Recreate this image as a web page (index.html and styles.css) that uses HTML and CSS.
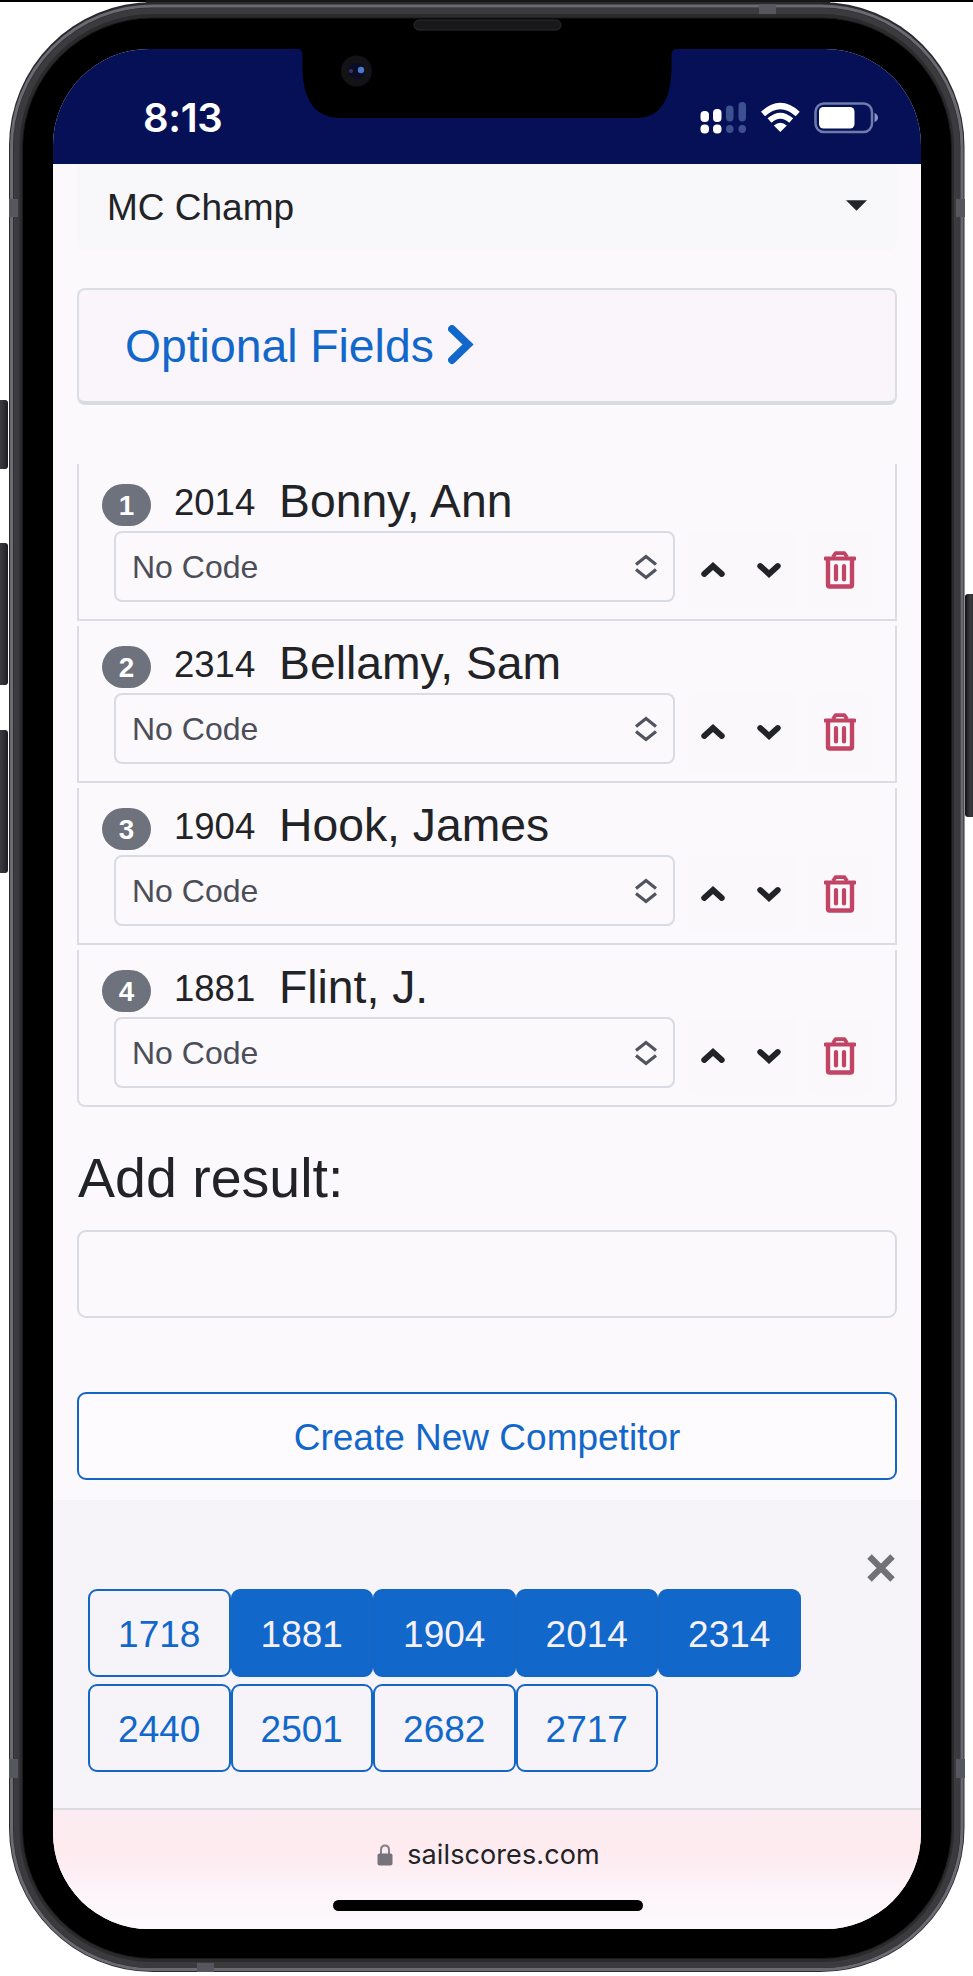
FILE: index.html
```html
<!DOCTYPE html>
<html lang="en">
<head>
<meta charset="utf-8">
<title>SailScores</title>
<link rel="stylesheet" href="styles.css">
</head>
<body>
<div class="stage">
  <svg class="frame" width="973" height="1976" viewBox="0 0 973 1976" aria-hidden="true">
    <defs>
      <linearGradient id="key" x1="0" x2="1"><stop offset="0" stop-color="#111114"/><stop offset=".4" stop-color="#3a3a40"/><stop offset="1" stop-color="#1d1d21"/></linearGradient>
    </defs>
    <rect width="973" height="2" fill="#000"/>
    <rect x="146" y="0" width="684" height="8" fill="#17171a"/>
    <g fill="url(#key)"><rect x="-4" y="400" width="12" height="69" rx="3"/><rect x="-4" y="543" width="12" height="142" rx="3"/><rect x="-4" y="730" width="12" height="143" rx="3"/><rect x="965" y="594" width="13" height="223" rx="3"/></g>
    <rect x="9" y="2" width="955.500" height="1970" rx="144" fill="#2b2b2e"/>
    <rect x="11.500" y="6" width="950.500" height="1963.500" rx="141" fill="none" stroke="#6b6a72" stroke-width="3"/>
    <rect x="16.500" y="11" width="940.500" height="1954" rx="136" fill="none" stroke="#3b3b3e" stroke-width="6"/>
    <rect x="22.500" y="18" width="929" height="1940.500" rx="130" fill="#000" stroke="#1a1a1d"/>
    <g fill="#56565e"><rect x="9" y="199" width="9" height="18"/><rect x="956" y="199" width="9" height="18"/><rect x="9" y="1759" width="9" height="19"/><rect x="956" y="1759" width="9" height="19"/><rect x="759" y="4" width="17" height="10"/><rect x="197" y="1963" width="17" height="9"/></g>
  </svg>

  <main class="screen">
    <header class="status">
      <span class="time">8:13</span>
      <svg class="signals" width="182" height="36" viewBox="698 100 182 36" aria-hidden="true">
        <g fill="#fff"><rect x="700.500" y="111" width="8.500" height="11" rx="4"/><rect x="700.500" y="124.500" width="8.500" height="9" rx="4"/><rect x="713" y="109" width="8.500" height="13" rx="4"/><rect x="713" y="124.500" width="8.500" height="9" rx="4"/></g>
        <g fill="#3d5090"><rect x="726" y="105.500" width="7.500" height="16" rx="3.700"/><rect x="726" y="125" width="7.500" height="8" rx="3.700"/><rect x="738.500" y="102" width="7.500" height="19.500" rx="3.700"/><rect x="738.500" y="125" width="7.500" height="8" rx="3.700"/></g>
        <g fill="none" stroke="#fff" stroke-width="6"><path d="M763 114Q780.300 98 797.700 114"/><path d="M769.500 120.500Q780.300 111 791.200 120.500"/></g>
        <path d="M773.800 125.500Q780.300 120 786.800 125.500L780.300 132Z" fill="#fff"/>
        <rect x="815.500" y="103.500" width="56.500" height="28.500" rx="8.500" fill="none" stroke="#6c7cab" stroke-width="2.500"/>
        <rect x="819" y="107" width="35.500" height="21.500" rx="4.500" fill="#fff"/>
        <path d="M874.500 113Q878 114.500 878 117.500T874.500 122Z" fill="#8497c8"/>
      </svg>
    </header>

    <section class="content">
      <div class="series"><span>MC Champ</span>
        <svg width="21" height="11" viewBox="0 0 21 11"><path d="M0 .3H21L10.500 10.800Z" fill="#222428"/></svg>
      </div>
      <div class="card"><span>Optional Fields</span>
        <svg width="26" height="40" viewBox="0 0 26 40"><path d="M4 4L20 19.500L4 35" fill="none" stroke="#1167ca" stroke-width="7.800" stroke-linejoin="miter" stroke-linecap="round"/></svg>
      </div>

      <svg class="defs" width="0" height="0" aria-hidden="true">
        <symbol id="sort" viewBox="0 0 22 26"><path d="M1 10.500L11 2.500L21 10.500M1 15.500L11 23.500L21 15.500" fill="none" stroke="#50545f" stroke-width="3.200"/></symbol>
        <symbol id="up" viewBox="0 0 24 16"><path d="M3.200 12L12 4L20.800 12" fill="none" stroke="#212327" stroke-width="5.800" stroke-linecap="round"/></symbol>
        <symbol id="down" viewBox="0 0 24 16"><path d="M3.200 4L12 12L20.800 4" fill="none" stroke="#212327" stroke-width="5.800" stroke-linecap="round"/></symbol>
        <symbol id="trash" viewBox="0 0 32 38"><g fill="none" stroke="#c24464"><path d="M9 6L11.500 2.200H20.500L23 6" stroke-width="3.800" stroke-linejoin="round"/><path d="M1.500 7.500H30.500" stroke-width="4" stroke-linecap="round"/><path d="M4 8V34Q4 35.500 5.500 35.500H26.500Q28 35.500 28 34V8" stroke-width="4.400"/><path d="M12 15V28.500M20 15V28.500" stroke-width="4.200" stroke-linecap="round"/></g></symbol>
      </svg>

      <div class="results">
        <div class="row">
          <div class="head"><b class="badge">1</b><span class="sail">2014</span><span class="name">Bonny, Ann</span></div>
          <div class="tools"><div class="code">No Code<svg width="22" height="26"><use href="#sort"/></svg></div><div class="move"><svg width="24" height="16"><use href="#up"/></svg><svg width="24" height="16"><use href="#down"/></svg></div><div class="del"><svg width="32" height="38"><use href="#trash"/></svg></div></div>
        </div>
        <div class="row">
          <div class="head"><b class="badge">2</b><span class="sail">2314</span><span class="name">Bellamy, Sam</span></div>
          <div class="tools"><div class="code">No Code<svg width="22" height="26"><use href="#sort"/></svg></div><div class="move"><svg width="24" height="16"><use href="#up"/></svg><svg width="24" height="16"><use href="#down"/></svg></div><div class="del"><svg width="32" height="38"><use href="#trash"/></svg></div></div>
        </div>
        <div class="row">
          <div class="head"><b class="badge">3</b><span class="sail">1904</span><span class="name">Hook, James</span></div>
          <div class="tools"><div class="code">No Code<svg width="22" height="26"><use href="#sort"/></svg></div><div class="move"><svg width="24" height="16"><use href="#up"/></svg><svg width="24" height="16"><use href="#down"/></svg></div><div class="del"><svg width="32" height="38"><use href="#trash"/></svg></div></div>
        </div>
        <div class="row last">
          <div class="head"><b class="badge">4</b><span class="sail">1881</span><span class="name">Flint, J.</span></div>
          <div class="tools"><div class="code">No Code<svg width="22" height="26"><use href="#sort"/></svg></div><div class="move"><svg width="24" height="16"><use href="#up"/></svg><svg width="24" height="16"><use href="#down"/></svg></div><div class="del"><svg width="32" height="38"><use href="#trash"/></svg></div></div>
        </div>
      </div>

      <div class="add">Add result:</div>
      <div class="field"></div>
      <div class="create">Create New Competitor</div>
    </section>

    <section class="picker">
      <svg class="close" width="28" height="28" viewBox="0 0 28 28"><path d="M2.500 2.500L25.500 25.500M25.500 2.500L2.500 25.500" stroke="#717178" stroke-width="6.300"/></svg>
      <div class="chips">
        <span class="chip">1718</span><span class="chip on">1881</span><span class="chip on">1904</span><span class="chip on">2014</span><span class="chip on">2314</span>
        <span class="chip">2440</span><span class="chip">2501</span><span class="chip">2682</span><span class="chip">2717</span>
      </div>
    </section>

    <footer class="browser">
      <div class="address">
        <svg width="16" height="22" viewBox="0 0 16 22"><path d="M4 10V6Q4 1.500 8 1.500T12 6V10" fill="none" stroke="#85818a" stroke-width="2"/><rect x=".5" y="9.500" width="15" height="12" rx="2" fill="#77737b"/></svg>
        <span>sailscores.com</span>
      </div>
      <div class="home"></div>
    </footer>
  </main>

  <svg class="notch" width="386" height="110" viewBox="294 14 386 110" aria-hidden="true">
    <path d="M294 49H298Q302.500 49 302.500 57V70Q304 118 341 118H636Q670 118 671.500 70V57Q671.500 49 676 49H680V44H294Z" fill="#000"/>
    <rect x="414" y="20" width="147" height="10" rx="5" fill="#18181a" stroke="#2c2c2f"/>
    <circle cx="356.500" cy="71" r="15.500" fill="#131317"/>
    <circle cx="357" cy="71" r="8" fill="#0b0c25"/>
    <circle cx="361" cy="70" r="3.200" fill="#5078c8"/><circle cx="351" cy="71" r="2" fill="#34346e"/>
  </svg>
</div>
</body>
</html>
```
FILE: styles.css
```css
* { box-sizing: border-box; }
body { margin: 0; background: #fff; font-family: "Liberation Sans", Arial, sans-serif; color: #212327; }
svg { display: block; flex: none; }
.stage { position: relative; width: 973px; height: 1976px; padding: 49px 52px 0 53px; overflow: hidden; }
.frame { position: absolute; left: 0; top: 0; }
.screen { position: relative; width: 868px; height: 1879.5px; border-radius: 96px; overflow: hidden; background: #fbf9fc; display: flex; flex-direction: column; }
.notch { position: absolute; left: 294px; top: 14px; }
.defs { position: absolute; }

.status { flex: none; height: 115px; background: #061056; display: flex; justify-content: space-between; padding: 51px 41px 0 90px; }
.time { font: 600 40px/36px Inter, sans-serif; color: #fff; letter-spacing: -0.3px; }

.content { flex: none; height: 1335.5px; padding: 0 24px; }
.series { height: 86px; display: flex; align-items: center; justify-content: space-between; padding: 2px 30px 0 30px; background: #f8f7fa; border-radius: 0 0 8px 8px; font-size: 37px; }
.series svg { margin-top: -5px; }
.card { margin-top: 38px; height: 117px; border: 2px solid #dcdee5; border-bottom: 4px solid #d7dbe2; border-radius: 8px; background: #f9f5fa; display: flex; align-items: center; padding-left: 46px; font-size: 46.3px; color: #1167ca; }
.card svg { margin-left: 14px; margin-top: -2px; }

.results { margin-top: 59px; display: flex; flex-direction: column; gap: 5px; }
.row { height: 157px; border: 2px solid #dcdde4; border-top: 0; }
.row.last { border-radius: 0 0 8px 8px; }
.head { height: 67px; padding: 7px 0 0 23px; display: flex; align-items: center; line-height: 60px; white-space: nowrap; }
.badge { width: 49px; height: 42px; margin-top: 8px; border-radius: 21px; background: #6d727d; color: #fff; font-size: 27.8px; line-height: 43px; text-align: center; }
.sail { width: 128px; padding-left: 23px; margin-top: 3px; font-size: 36.5px; }
.name { font-size: 46.3px; }
.tools { display: flex; padding-left: 35px; }
.code { width: 561px; height: 71px; border: 2px solid #d8dbe2; border-radius: 8px; display: flex; align-items: center; justify-content: space-between; padding: 1px 16px 0 16px; font-size: 32px; color: #4b4e58; }
.move { width: 110px; height: 77px; margin: 1px 0 0 12px; padding: 0 16px 1px 14px; display: flex; align-items: center; justify-content: space-between; background: #faf8fa; border-radius: 8px; }
.del { width: 64px; height: 77px; margin: 1px 0 0 11px; padding-bottom: 1px; display: flex; align-items: center; justify-content: center; background: #faf8fa; border-radius: 8px; }

.add { margin-top: 42px; height: 60px; line-height: 58px; padding-left: 1px; font-size: 55.5px; }
.field { margin-top: 21px; height: 88px; border: 2px solid #d8dbe2; border-radius: 9px; }
.create { margin-top: 74px; height: 88px; border: 2px solid #1466c4; border-radius: 9px; color: #1167ca; font-size: 37px; line-height: 88px; text-align: center; background: #fdfbfe; }

.picker { flex: none; height: 310px; background: #f6f4f8; border-bottom: 2px solid #dadbe1; padding: 54px 26px 0 35px; display: flex; flex-direction: column; }
.close { align-self: flex-end; }
.chips { margin-top: 7.5px; display: grid; grid-template-columns: repeat(5, 142.5px); row-gap: 7px; }
.chip { height: 88px; border: 2px solid #1466c4; border-radius: 9px; color: #1167ca; font-size: 37px; line-height: 88px; text-align: center; }
.chip.on { background: #1167ca; color: #f5f1f7; }

.browser { flex: 1; padding-top: 28px; display: flex; flex-direction: column; align-items: center; background: linear-gradient(#fcebf0 0%, #fdebf0 38%, #fdf4f9 68%, #fdfafd 100%); }
.address { display: flex; align-items: center; gap: 14px; height: 34px; padding-left: 3px; font: 27px/34px Inter, sans-serif; letter-spacing: 0.1px; }
.home { width: 310px; height: 11px; border-radius: 6px; background: #000; margin: 28px 0 0 2px; }
```
